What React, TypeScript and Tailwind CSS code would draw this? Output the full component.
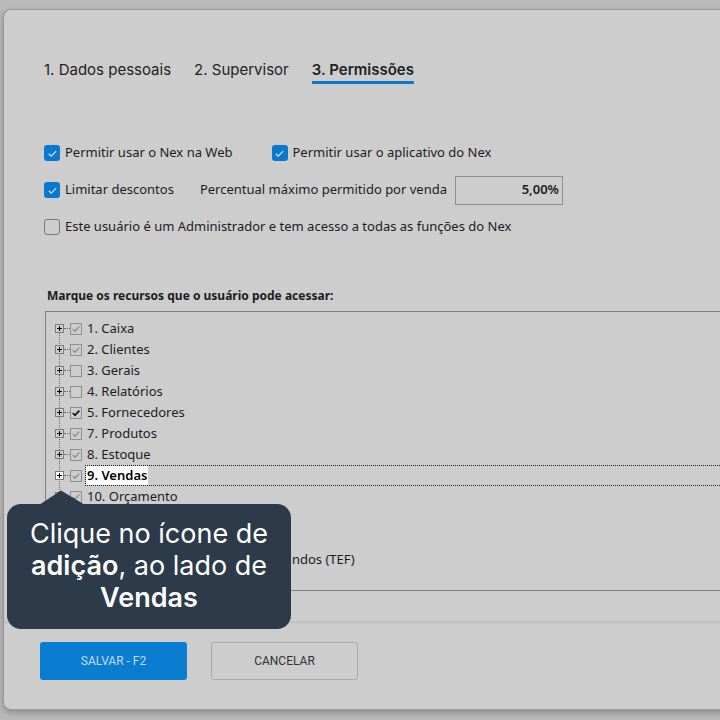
import React from 'react';

type Recurso = { nome: string; marcado: 'cinza' | 'preto' | 'vazio'; selecionado?: boolean };

const recursos: Recurso[] = [
  { nome: '1. Caixa', marcado: 'cinza' },
  { nome: '2. Clientes', marcado: 'cinza' },
  { nome: '3. Gerais', marcado: 'vazio' },
  { nome: '4. Relatórios', marcado: 'vazio' },
  { nome: '5. Fornecedores', marcado: 'preto' },
  { nome: '7. Produtos', marcado: 'cinza' },
  { nome: '8. Estoque', marcado: 'cinza' },
  { nome: '9. Vendas', marcado: 'cinza', selecionado: true },
  { nome: '10. Orçamento', marcado: 'cinza' },
  { nome: '11. Financeiro', marcado: 'cinza' },
  { nome: '12. Fiscal', marcado: 'cinza' },
  { nome: '13. Transferência Eletrônica de Fundos (TEF)', marcado: 'cinza' },
];

function CheckAzul({ marcado }: { marcado: boolean }) {
  if (!marcado) {
    return <span className="w-4 h-4 rounded-[3px] border border-[#7a7a7a] bg-[#cdcdcd] shrink-0" />;
  }
  return (
    <span className="w-4 h-4 rounded-[3px] bg-[#0a78cf] flex items-center justify-center shrink-0">
      <svg width="11" height="11" viewBox="0 0 12 12" fill="none">
        <path d="M2 6.3l2.6 2.6L10 3.4" stroke="#cfe3f3" strokeWidth="1.4" />
      </svg>
    </span>
  );
}

function CheckArvore({ marcado }: { marcado: Recurso['marcado'] }) {
  return (
    <span className="w-[12px] h-[12px] border border-[#8e8e8e] flex items-center justify-center shrink-0">
      {marcado !== 'vazio' && (
        <svg width="10" height="10" viewBox="0 0 10 10" fill="none">
          <path
            d="M1.8 5l2.2 2.3L8.3 2.6"
            stroke={marcado === 'preto' ? '#111' : '#8c8c8c'}
            strokeWidth={marcado === 'preto' ? 1.8 : 1.4}
          />
        </svg>
      )}
    </span>
  );
}

function Mais({ destaque }: { destaque?: boolean }) {
  return (
    <span
      className={`relative z-10 w-[9px] h-[9px] border border-[#7b7b7b] flex items-center justify-center shrink-0 ${
        destaque ? 'bg-white' : 'bg-[#cdcdcd]'
      }`}
    >
      <svg width="7" height="7" viewBox="0 0 7 7">
        <path d="M1 3.5h5M3.5 1v5" stroke="#000" strokeWidth="1" />
      </svg>
    </span>
  );
}

export default function App() {
  return (
    <div
      className="w-[720px] h-[720px] overflow-hidden relative bg-[#bababa] pt-[9px] pl-[3px] text-[#1c1c1c]"
      style={{ fontFamily: '"Noto Sans", sans-serif' }}
    >
      <div className="h-[701px] w-[760px] bg-[#cdcdcd] rounded-l-[8px] border-l border-t border-b border-[#9a9a9a] shadow-[0_3px_6px_rgba(0,0,0,0.25)] flex flex-col">
        {/* conteúdo do formulário */}
        <div className="h-[612px] border-b border-[#c2c2c2] shadow-[0_1px_2px_rgba(0,0,0,0.08)] pl-[40px] flex flex-col">
          <div className="flex gap-[23px] mt-[50px] text-[15px] text-[#222]" style={{ fontFamily: 'Inter, sans-serif' }}>
            <span className="leading-[20px] pb-[3px]">1. Dados pessoais</span>
            <span className="leading-[20px] pb-[3px]">2. Supervisor</span>
            <span className="leading-[20px] pb-[1px] font-semibold border-b-[3px] border-[#0a78cf]">3. Permissões</span>
          </div>

          <div className="mt-[61px] flex flex-col gap-[21px] text-[13px]">
            <div className="flex items-center h-4">
              <CheckAzul marcado />
              <span className="ml-[5px]">Permitir usar o Nex na Web</span>
              <span className="ml-[39px] flex items-center">
                <CheckAzul marcado />
                <span className="ml-[5px]">Permitir usar o aplicativo do Nex</span>
              </span>
            </div>
            <div className="flex items-center h-4">
              <CheckAzul marcado />
              <span className="ml-[5px]">Limitar descontos</span>
              <span className="ml-[26px]">Percentual máximo permitido por venda</span>
              <span className="ml-[8px] w-[108px] h-[29px] border border-[#8e8e8e] flex items-center justify-end pr-[3px] font-semibold">
                5,00%
              </span>
            </div>
            <div className="flex items-center h-4">
              <CheckAzul marcado={false} />
              <span className="ml-[5px]">Este usuário é um Administrador e tem acesso a todas as funções do Nex</span>
            </div>
          </div>

          <div className="mt-[53px] ml-[3px] text-[12px] font-bold leading-[16px]">
            Marque os recursos que o usuário pode acessar:
          </div>

          {/* árvore de recursos */}
          <div className="mt-[7px] ml-[1px] h-[280px] border border-[#7f7f7f] overflow-hidden relative pt-[6px] text-[13px]">
            <div className="absolute left-[13px] top-[16px] h-[260px] border-l border-dotted border-[#6a6a6a]" />
            {recursos.map((r) => (
              <div key={r.nome} className="h-[21px] flex items-center pl-[9px]">
                <Mais destaque={r.selecionado} />
                <span className="w-[6px] border-t border-dotted border-[#6a6a6a]" />
                <CheckArvore marcado={r.marcado} />
                {r.selecionado ? (
                  <span className="ml-[3px] flex-1 h-[21px] border border-dotted border-[#222] flex items-center">
                    <span className="bg-white font-semibold text-black px-[1px] leading-[19px]">{r.nome}</span>
                  </span>
                ) : (
                  <span className="ml-[5px] whitespace-nowrap">{r.nome}</span>
                )}
              </div>
            ))}
          </div>
        </div>

        {/* rodapé */}
        <div className="flex gap-[24px] pl-[36px] mt-[20px] text-[12px]" style={{ fontFamily: 'Roboto, sans-serif' }}>
          <button className="w-[147px] h-[38px] rounded-[3px] bg-[#0a7dd0] text-[#c4dbee]">SALVAR - F2</button>
          <button className="w-[147px] h-[38px] rounded-[3px] border border-[#a9a9a9] text-[#333]">CANCELAR</button>
        </div>
      </div>

      {/* dica */}
      <div
        className="absolute z-20 left-[7px] top-[504px] w-[284px] h-[125px] rounded-[14px] bg-[#2c3a4a] flex flex-col items-center justify-center text-white text-[27px] leading-[32px] pb-[1px]"
        style={{ fontFamily: 'Inter, sans-serif' }}
      >
        <svg className="absolute -top-[14px] left-[32px]" width="46" height="15" viewBox="0 0 46 15">
          <path d="M0 15L22 0.5L46 15Z" fill="#2c3a4a" />
        </svg>
        <span>Clique no ícone de</span>
        <span>
          <span className="font-semibold">adição</span>, ao lado de
        </span>
        <span className="font-semibold">Vendas</span>
      </div>
    </div>
  );
}
